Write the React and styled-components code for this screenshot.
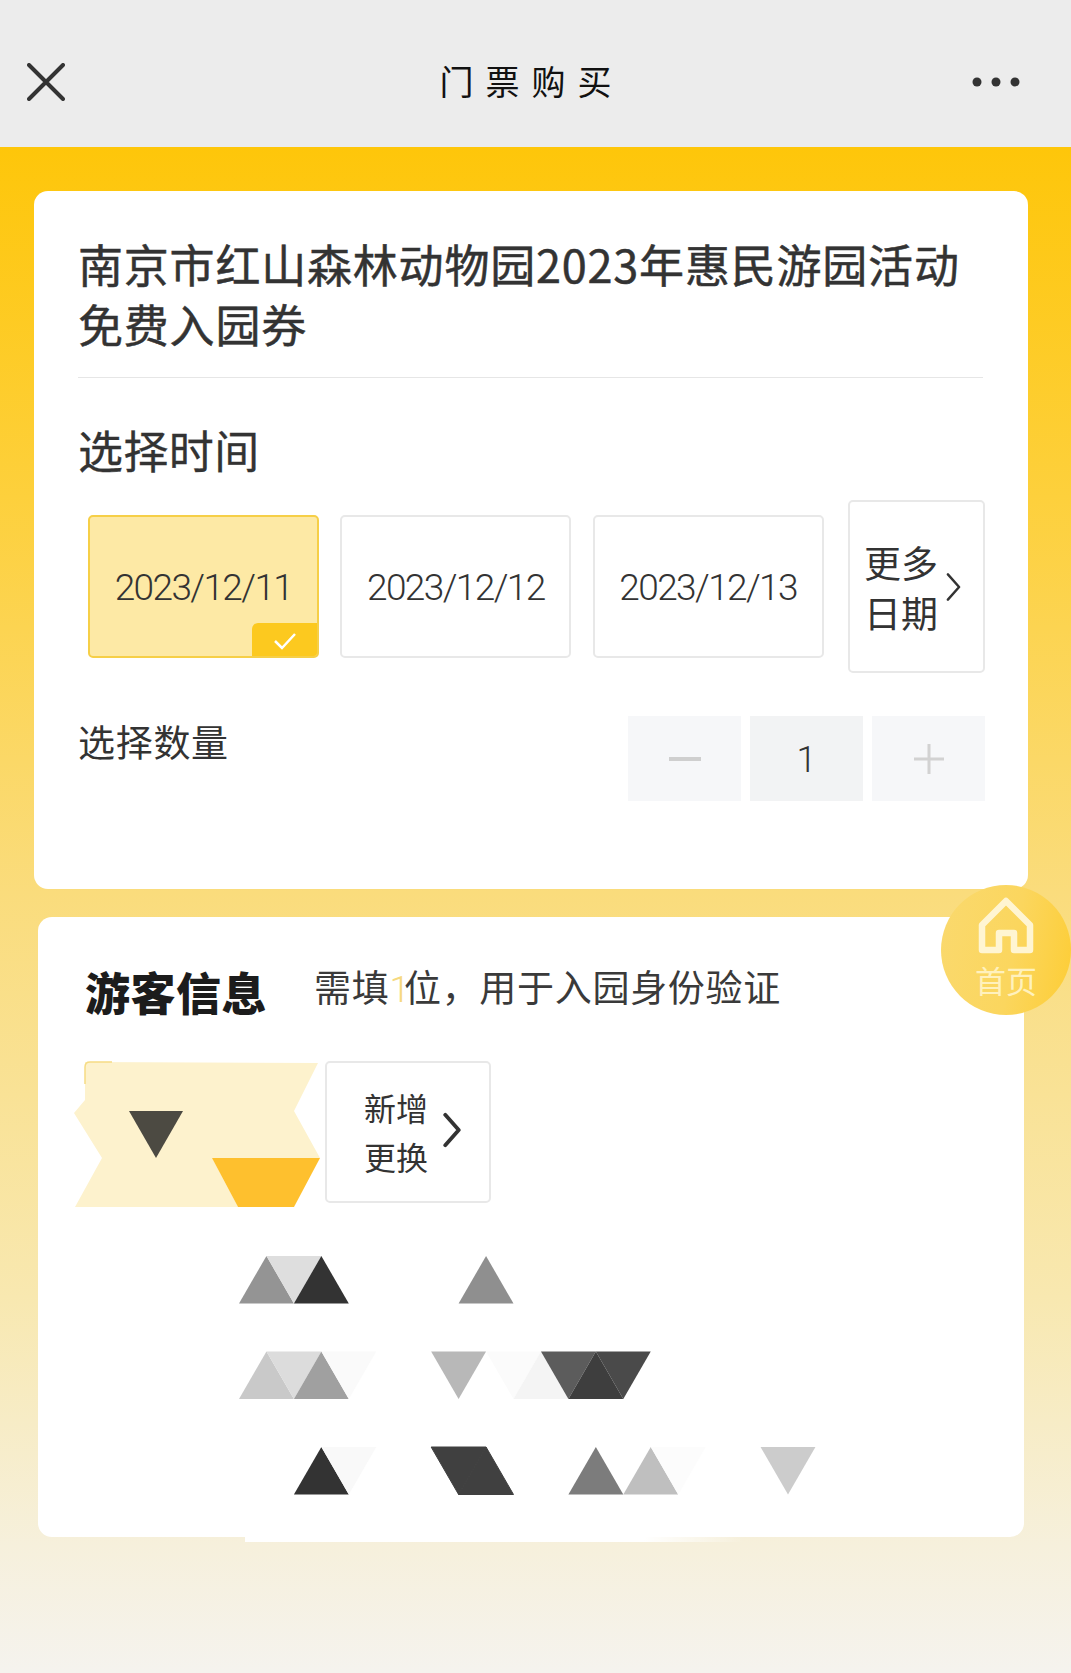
import React from 'react';
import styled, { createGlobalStyle } from 'styled-components';

const GlobalStyle = createGlobalStyle`
  html, body {
    margin: 0;
    padding: 0;
    background: #f5f3ee;
  }
  * {
    box-sizing: border-box;
  }
`;

const cjk = `"Noto Sans CJK SC", "Noto Sans", sans-serif`;

const Page = styled.div`
  position: relative;
  width: 1071px;
  height: 1673px;
  overflow: hidden;
  font-family: ${cjk};
  color: #333;
`;

const NavBar = styled.header`
  height: 147px;
  background: #ececec;
  display: flex;
  align-items: center;
  justify-content: space-between;
  padding: 17px 51px 0 27px;
`;

const NavTitle = styled.h1`
  margin: 0 0 2px 26px;
  font-size: 34px;
  font-weight: 400;
  letter-spacing: 12px;
  color: #111;
  line-height: 40px;
`;

const Content = styled.main`
  height: 1526px;
  padding-top: 44px;
  background: linear-gradient(
    180deg,
    #fec60a 0,
    #fdd03c 350px,
    #fadc7c 745px,
    #f8e8b0 1150px,
    #f6f0dc 1400px,
    #f5f3ee 1526px
  );
`;

const TicketCard = styled.section`
  height: 698px;
  margin: 0 43px 0 34px;
  padding: 43px 45px 0 44px;
  background: #fff;
  border-radius: 14px;
`;

const TicketName = styled.h2`
  margin: 0;
  font-size: 45px;
  letter-spacing: 0.8px;
  line-height: 60px;
  font-weight: 400;
  -webkit-text-stroke: 0.5px #333;
  color: #333;
`;

const Divider = styled.hr`
  margin: 23px 0 0;
  border: 0;
  height: 1px;
  background: #e6e6e6;
`;

const SectionTitle = styled.h3`
  margin: 42px 0 0;
  font-size: 45px;
  letter-spacing: 0.4px;
  line-height: 60px;
  font-weight: 400;
  -webkit-text-stroke: 0.3px #333;
`;

const DateRow = styled.div`
  display: flex;
  align-items: center;
  gap: 21.5px;
  margin: 20px -2px 0 10px;
`;

const DateCard = styled.div`
  position: relative;
  width: 231px;
  height: 143px;
  padding-top: 2px;
  display: flex;
  align-items: center;
  justify-content: center;
  border-radius: 5px;
  border: 2px solid ${(p) => (p.$active ? '#f6cf47' : '#e8e8e8')};
  background: ${(p) => (p.$active ? '#fde9a5' : '#fff')};
  font-family: Roboto, sans-serif;
  font-weight: 300;
  font-size: 37px;
  letter-spacing: -1.6px;
  overflow: hidden;
`;

const CheckBadge = styled.span`
  position: absolute;
  right: -2px;
  bottom: -2px;
  width: 67px;
  height: 35px;
  display: flex;
  align-items: center;
  justify-content: center;
  background: #fcc91f;
  border-top-left-radius: 6px;
`;

const MoreDates = styled.div`
  width: 137px;
  height: 173px;
  margin-left: 3px;
  display: flex;
  align-items: center;
  gap: 8px;
  padding-left: 14px;
  border: 2px solid #e8e8e8;
  border-radius: 5px;
  font-size: 37px;
  line-height: 50px;
`;

const QuantityRow = styled.div`
  display: flex;
  justify-content: space-between;
  align-items: flex-start;
  margin: 43px -2px 0 0;
`;

const QuantityLabel = styled.span`
  font-size: 37px;
  letter-spacing: 0.7px;
  line-height: 50px;
`;

const Stepper = styled.div`
  display: flex;
  gap: 9px;
`;

const StepBox = styled.div`
  width: 113px;
  height: 85px;
  padding-top: ${(p) => (p.$value ? '3px' : '0')};
  display: flex;
  align-items: center;
  justify-content: center;
  background: ${(p) => (p.$value ? '#f2f3f4' : '#f6f7f9')};
  font-family: Roboto, sans-serif;
  font-weight: 300;
  font-size: 36px;
`;

const VisitorCard = styled.section`
  position: relative;
  height: 620px;
  margin: 28px 47px 0 38px;
  padding: 44px 0 0 47px;
  background: #fff;
  border-radius: 14px;

  &::after {
    content: '';
    position: absolute;
    left: 207px;
    right: 280px;
    bottom: -5px;
    height: 5px;
    background: linear-gradient(90deg, #fff 80%, rgba(255, 255, 255, 0));
  }
`;

const VisitorHead = styled.div`
  display: flex;
  align-items: center;
  gap: 47px;
`;

const VisitorTitle = styled.h3`
  margin: 0;
  font-size: 45px;
  letter-spacing: 0.5px;
  line-height: 60px;
  font-weight: 900;
  color: #1c1c1c;
`;

const VisitorHint = styled.p`
  margin: 0 0 8px;
  font-size: 37px;
  letter-spacing: 0.7px;
  line-height: 50px;
  font-weight: 400;
  color: #3a3a3a;

  em {
    font-style: normal;
    letter-spacing: -6px;
    color: #f6d980;
    font-family: Roboto, sans-serif;
    font-weight: 300;
  }
`;

const VisitorRow = styled.div`
  display: flex;
  align-items: flex-start;
  gap: 1px;
  margin: 38px 0 0 -11px;
`;

const PersonMosaic = styled.svg`
  display: block;
  flex: none;
`;

const SwitchCard = styled.div`
  width: 166px;
  height: 142px;
  display: flex;
  align-items: center;
  gap: 15px;
  padding-left: 37px;
  border: 2px solid #e8e8e8;
  border-radius: 5px;
  font-size: 32px;
  line-height: 49px;
  font-weight: 400;

  svg {
    margin-bottom: 4px;
  }
`;

const FieldMosaic = styled.svg`
  display: block;
  margin: 49px 0 0 154px;
`;

const HomeButton = styled.div`
  position: absolute;
  left: 941px;
  top: 885px;
  width: 130px;
  height: 130px;
  padding-top: 11px;
  border-radius: 50%;
  display: flex;
  flex-direction: column;
  align-items: center;
  background: linear-gradient(100deg, #fad96e 0%, #fbd65e 55%, #fdcd35 100%);
  color: #fff1bd;
  font-size: 31px;
  line-height: 34px;
`;

const HomeLabel = styled.span`
  margin-top: 9px;
`;

const UNIT_X = 27.45;
const UNIT_Y = 47.5;
const ROW_PITCH = 95.5;

// [left column, row, pointing up, grey]
const cells = [
  [0, 0, true, '#949494'],
  [1, 0, false, '#dedede'],
  [2, 0, true, '#333333'],
  [8, 0, true, '#8f8f8f'],
  [0, 1, true, '#c9c9c9'],
  [1, 1, false, '#dcdcdc'],
  [2, 1, true, '#a0a0a0'],
  [3, 1, false, '#fafafa'],
  [7, 1, false, '#b8b8b8'],
  [9, 1, false, '#fbfbfb'],
  [10, 1, true, '#f4f4f4'],
  [11, 1, false, '#5c5c5c'],
  [13, 1, false, '#4a4a4a'],
  [12, 1, true, '#3e3e3e'],
  [2, 2, true, '#333333'],
  [3, 2, false, '#f9f9f9'],
  [7, 2, false, '#404040'],
  [8, 2, true, '#404040'],
  [12, 2, true, '#7c7c7c'],
  [14, 2, true, '#bfbfbf'],
  [15, 2, false, '#fcfcfc'],
  [19, 2, false, '#cccccc'],
];

const cellPoints = (col, row, up) => {
  const x = col * UNIT_X;
  const top = row * ROW_PITCH;
  const bottom = top + UNIT_Y;
  return up
    ? `${x},${bottom} ${x + UNIT_X},${top} ${x + UNIT_X * 2},${bottom}`
    : `${x},${top} ${x + UNIT_X * 2},${top} ${x + UNIT_X},${bottom}`;
};

const Chevron = ({ width, height, stroke }) => (
  <svg width={width} height={height} viewBox="0 0 16 30" fill="none" style={{ flex: 'none' }}>
    <path d="M2 1.5 L14 15 L2 28.5" stroke="#333" strokeWidth={stroke} strokeLinecap="round" strokeLinejoin="round" />
  </svg>
);

const App = () => (
  <Page>
    <GlobalStyle />
    <NavBar>
      <svg width="38" height="38" viewBox="0 0 38 38" fill="none">
        <path d="M2 2 L36 36 M36 2 L2 36" stroke="#333" strokeWidth="4" strokeLinecap="round" />
      </svg>
      <NavTitle>门票购买</NavTitle>
      <svg width="48" height="10" viewBox="0 0 48 10" fill="#333">
        <circle cx="5" cy="5" r="4.5" />
        <circle cx="24" cy="5" r="4.5" />
        <circle cx="43" cy="5" r="4.5" />
      </svg>
    </NavBar>
    <Content>
      <TicketCard>
        <TicketName>南京市红山森林动物园2023年惠民游园活动免费入园券</TicketName>
        <Divider />
        <SectionTitle>选择时间</SectionTitle>
        <DateRow>
          <DateCard $active>
            2023/12/11
            <CheckBadge>
              <svg width="24" height="18" viewBox="0 0 24 18" fill="none">
                <path d="M2 9 L9 16 L22 2" stroke="#fff" strokeWidth="2.5" />
              </svg>
            </CheckBadge>
          </DateCard>
          <DateCard>2023/12/12</DateCard>
          <DateCard>2023/12/13</DateCard>
          <MoreDates>
            <span>更多<br />日期</span>
            <Chevron width={15} height={28} stroke={2.6} />
          </MoreDates>
        </DateRow>
        <QuantityRow>
          <QuantityLabel>选择数量</QuantityLabel>
          <Stepper>
            <StepBox>
              <svg width="32" height="4" viewBox="0 0 32 4"><rect width="32" height="4" fill="#cfcfcf" /></svg>
            </StepBox>
            <StepBox $value>1</StepBox>
            <StepBox>
              <svg width="30" height="30" viewBox="0 0 30 30">
                <path d="M0 15 H30 M15 0 V30" stroke="#d2d2d2" strokeWidth="3" />
              </svg>
            </StepBox>
          </Stepper>
        </QuantityRow>
      </TicketCard>
      <VisitorCard>
        <VisitorHead>
          <VisitorTitle>游客信息</VisitorTitle>
          <VisitorHint>需填<em>1</em>位，用于入园身份验证</VisitorHint>
        </VisitorHead>
        <VisitorRow>
          <PersonMosaic width="250" height="146" viewBox="74 1061 250 146">
            <polygon
              points="85,1062 318,1063 294,1111 320,1158 212,1158 238,1207 75,1207 102,1158 74,1113 85,1100"
              fill="#fdf2cd"
            />
            <path d="M85 1084 V1067 Q85 1062 90 1062 H112" stroke="#f6dc84" strokeWidth="1.5" fill="none" />
            <polygon points="129,1111 183,1111 156,1158" fill="#4c4a42" />
            <polygon points="212,1158 320,1158 294,1207 238,1207" fill="#fec02e" />
          </PersonMosaic>
          <SwitchCard>
            <span>新增<br />更换</span>
            <Chevron width={18} height={36} stroke={3.4} />
          </SwitchCard>
        </VisitorRow>
        <FieldMosaic width="600" height="240" viewBox="0 0 600 240">
          {cells.map(([col, row, up, fill]) => (
            <polygon
              key={`${col}-${row}`}
              points={cellPoints(col, row, up)}
              fill={fill}
              stroke={fill === '#404040' ? fill : 'none'}
              strokeWidth="1"
            />
          ))}
        </FieldMosaic>
      </VisitorCard>
    </Content>
    <HomeButton>
      <svg width="60" height="58" viewBox="46 26 60 58" fill="none">
        <path
          d="M76 31 L52 55 V80 H69 V63 H84 V80 H100 V55 Z"
          stroke="#fff5d2"
          strokeWidth="6.5"
          strokeLinejoin="round"
        />
      </svg>
      <HomeLabel>首页</HomeLabel>
    </HomeButton>
  </Page>
);

export default App;
